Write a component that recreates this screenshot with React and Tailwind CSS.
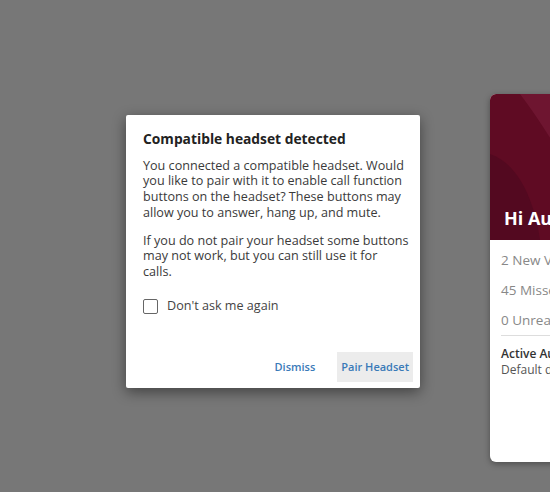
import React from 'react';

export default function App() {
    return (
        <div className="relative h-[492px] w-[550px] overflow-hidden bg-[#777777] font-['Open_Sans',sans-serif]">
            {/* Background card (partly off screen) */}
            <div className="absolute left-[490px] top-[94px] flex h-[368px] w-[200px] flex-col overflow-hidden rounded-[6px] bg-white shadow-[0_2px_6px_rgba(0,0,0,0.35)]">
                <div className="relative flex h-[146px] items-end bg-[#5f0b23] px-[14px] pb-[8px]">
                    <svg className="absolute inset-0 h-full w-full" viewBox="0 0 200 146" preserveAspectRatio="none" aria-hidden="true">
                        <path d="M30 0 C60 40 90 90 110 146 L200 146 L200 0 Z" fill="#6e1530" />
                        <path d="M0 60 C30 70 45 110 50 146 L0 146 Z" fill="#530920" />
                    </svg>
                    <div className="relative whitespace-nowrap text-[18px] font-bold text-white">Hi Austin</div>
                </div>
                <div className="flex flex-col px-[11px] text-[13.5px] leading-[18px] text-[#888]">
                    <div className="whitespace-nowrap pt-[11px] pb-[6px]">2 New Voicemails</div>
                    <div className="whitespace-nowrap py-[6px]">45 Missed Calls</div>
                    <div className="whitespace-nowrap border-b border-[#ddd] py-[6px]">0 Unread Messages</div>
                    <div className="whitespace-nowrap pt-[10px] text-[12px] font-semibold leading-[16px] text-[#333]">Active Audio</div>
                    <div className="whitespace-nowrap text-[12px] leading-[16px] text-[#555]">Default device</div>
                </div>
            </div>

            {/* Dialog */}
            <div className="absolute left-[126px] top-[115px] flex h-[273px] w-[294px] flex-col rounded-[2px] bg-white pl-[17px] pr-[9px] pt-[14px] shadow-[0_4px_14px_rgba(0,0,0,0.45)]">
                <div className="text-[13.8px] font-bold text-[#222]">Compatible headset detected</div>
                <p className="mt-[8px] text-[12.6px] leading-[15.7px] text-[#3a3a3a]">
                    You connected a compatible headset. Would you like to pair with it to enable call function buttons on the headset? These buttons may allow you to answer, hang up, and mute.
                </p>
                <p className="mt-[12px] text-[12.6px] leading-[15.7px] text-[#3a3a3a]">
                    If you do not pair your headset some buttons may not work, but you can still use it for<br />calls.
                </p>
                <label className="mt-[17px] flex items-center gap-[9px] text-[12.6px] text-[#444]">
                    <span className="h-[15px] w-[15px] rounded-[2px] border-[1.5px] border-[#666]" />
                    Don't ask me again
                </label>
                <div className="mt-auto -mr-[2px] mb-[6px] flex items-center justify-end gap-[6px]">
                    <button type="button" className="px-[16px] py-[7px] text-[11px] font-semibold text-[#3a7ab8]">Dismiss</button>
                    <button type="button" className="bg-[#ececec] px-[4px] py-[7px] text-[11px] font-semibold text-[#3a7ab8]">Pair Headset</button>
                </div>
            </div>
        </div>
    );
}
